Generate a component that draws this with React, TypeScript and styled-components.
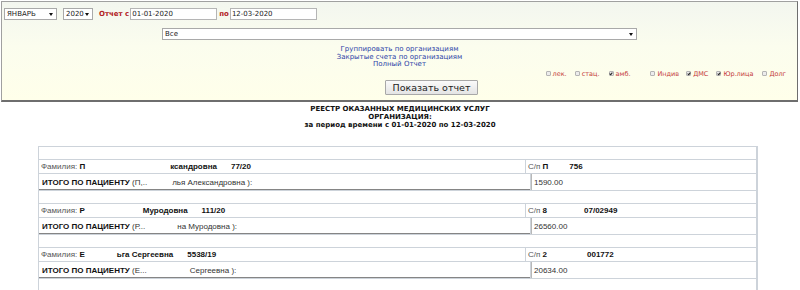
import styled, { createGlobalStyle } from 'styled-components'

interface PatientRow {
  initial: string
  nameHidden: number
  nameTail: string
  card: string
  totalInitial: string
  totalHidden: number
  totalTail: string
  policyHead: string
  policyHidden: number
  policyTail: string
  sum: string
}

const patients: PatientRow[] = [
  {
    initial: 'П',
    nameHidden: 85,
    nameTail: 'ксандровна',
    card: '77/20',
    totalInitial: 'П,..',
    totalHidden: 25,
    totalTail: 'лья Александровна ):',
    policyHead: 'П',
    policyHidden: 21,
    policyTail: '756',
    sum: '1590.00',
  },
  {
    initial: 'Р',
    nameHidden: 58,
    nameTail: 'Муродовна',
    card: '111/20',
    totalInitial: 'Р...',
    totalHidden: 32,
    totalTail: 'на Муродовна ):',
    policyHead: '8',
    policyHidden: 37,
    policyTail: '07/02949',
    sum: '26560.00',
  },
  {
    initial: 'Е',
    nameHidden: 32,
    nameTail: 'ьга Сергеевна',
    card: '5538/19',
    totalInitial: 'Е...',
    totalHidden: 43,
    totalTail: 'Сергеевна ):',
    policyHead: '2',
    policyHidden: 40,
    policyTail: '001772',
    sum: '20634.00',
  },
]

const flags = [
  { label: 'лек.', checked: false, space: 0 },
  { label: 'стац.', checked: false, space: 8 },
  { label: 'амб.', checked: true, space: 9 },
  { label: 'Индив', checked: false, space: 20 },
  { label: 'ДМС', checked: true, space: 7 },
  { label: 'Юр.лица', checked: true, space: 8 },
  { label: 'Долг', checked: false, space: 9 },
]

function App() {
  return (
    <>
      <GlobalStyle />
      <FilterPanel>
        <TopRow>
          <SelectWrap $width={53}>
            <Select defaultValue="1">
              <option value="1">ЯНВАРЬ</option>
            </Select>
          </SelectWrap>
          <SelectWrap $width={30} $space={6}>
            <Select defaultValue="2020">
              <option value="2020">2020</option>
            </Select>
          </SelectWrap>
          <FieldLabel $space={6}>Отчет с</FieldLabel>
          <DateInput defaultValue="01-01-2020" />
          <FieldLabel $space={2}>по</FieldLabel>
          <DateInput defaultValue="12-03-2020" />
        </TopRow>
        <TypeRow>
          <SelectWrap $width={475}>
            <Select defaultValue="all">
              <option value="all">Все</option>
            </Select>
          </SelectWrap>
        </TypeRow>
        <LinkList>
          <ReportLink href="#">Группировать по организациям</ReportLink>
          <ReportLink href="#">Закрытые счета по организациям</ReportLink>
          <ReportLink href="#">Полный Отчет</ReportLink>
        </LinkList>
        <FlagRow>
          {flags.map((f) => (
            <Flag key={f.label} $space={f.space}>
              <FlagBox type="checkbox" defaultChecked={f.checked} />
              {f.label}
            </Flag>
          ))}
        </FlagRow>
        <ButtonRow>
          <ShowButton type="button">Показать отчет</ShowButton>
        </ButtonRow>
      </FilterPanel>

      <Heading>
        <div>РЕЕСТР ОКАЗАННЫХ МЕДИЦИНСКИХ УСЛУГ</div>
        <div>ОРГАНИЗАЦИЯ:</div>
        <div>за период времени с 01-01-2020 по 12-03-2020</div>
      </Heading>

      <Registry>
        {patients.map((p) => (
          <div key={p.card}>
            <Spacer />
            <Row $height={13}>
              <Cell $width={487} $pad={2}>
                <Muted>Фамилия:&nbsp;</Muted>
                <Strong>{p.initial}</Strong>
                <Hidden $width={p.nameHidden} />
                <Strong>{p.nameTail}</Strong>
                <Strong $space={14}>{p.card}</Strong>
              </Cell>
              <Cell $pad={2}>
                <Muted>С/п&nbsp;</Muted>
                <Strong>{p.policyHead}</Strong>
                <Hidden $width={p.policyHidden} />
                <Strong>{p.policyTail}</Strong>
              </Cell>
            </Row>
            <Row $height={16}>
              <TotalCell $width={492} $pad={3}>
                <Strong>ИТОГО ПО ПАЦИЕНТУ</Strong>
                <Plain>&nbsp;({p.totalInitial}</Plain>
                <Hidden $width={p.totalHidden} />
                <Plain>{p.totalTail}</Plain>
              </TotalCell>
              <SumCell $pad={2}>
                <Plain>{p.sum}</Plain>
              </SumCell>
            </Row>
          </div>
        ))}
        <Spacer />
      </Registry>
    </>
  )
}

export default App

const GlobalStyle = createGlobalStyle`
  body {
    margin: 0;
    background: #ffffff;
    font-family: "DejaVu Sans", Verdana, sans-serif;
  }
`

const FilterPanel = styled.div`
  box-sizing: border-box;
  width: 797px;
  height: 101px;
  margin: 1px 0 0 1px;
  padding: 5px 2px 0;
  border: 1px solid #a0a0a0;
  border-right-color: #6e6e6e;
  border-bottom: 2px solid #6e6e6e;
  background: linear-gradient(180deg, #f3f6ef 0%, #fbfdee 45%, #ffffea 100%);
`

const TopRow = styled.div`
  display: flex;
  align-items: center;
  height: 13px;
`

const SelectWrap = styled.div<{ $width: number; $space?: number }>`
  position: relative;
  display: flex;
  width: ${(p) => p.$width}px;
  margin-left: ${(p) => p.$space ?? 0}px;

  &::after {
    content: '';
    position: absolute;
    right: 4px;
    top: 5px;
    border-left: 2px solid transparent;
    border-right: 2px solid transparent;
    border-top: 3px solid #111;
    pointer-events: none;
  }
`

const Select = styled.select`
  appearance: none;
  box-sizing: border-box;
  width: 100%;
  height: 12px;
  padding: 0 2px;
  border: 1px solid #a9a9a9;
  border-radius: 0;
  background: #fff;
  font-family: "DejaVu Sans", Verdana, sans-serif;
  font-size: 7px;
  line-height: 10px;
  color: #222;
`

const FieldLabel = styled.span<{ $space: number }>`
  margin: 0 1px 0 ${(p) => p.$space}px;
  font-size: 7px;
  font-weight: bold;
  color: #b22222;
`

const DateInput = styled.input`
  box-sizing: border-box;
  width: 87px;
  height: 12px;
  padding: 0 1px;
  border: 1px solid #b5b5b5;
  background: #fff;
  font-family: "DejaVu Sans", Verdana, sans-serif;
  font-size: 7px;
  color: #222;
`

const TypeRow = styled.div`
  display: flex;
  justify-content: center;
  margin-top: 8px;
`

const LinkList = styled.div`
  display: flex;
  flex-direction: column;
  align-items: center;
  margin-top: 6px;
`

const ReportLink = styled.a`
  font-size: 7px;
  line-height: 7.5px;
  color: #2b3fa8;
  text-decoration: none;
`

const FlagRow = styled.div`
  display: flex;
  justify-content: flex-end;
  align-items: center;
  height: 8px;
  padding-right: 9px;
  margin-top: 1px;
`

const Flag = styled.label<{ $space: number }>`
  display: flex;
  align-items: center;
  margin-left: ${(p) => p.$space}px;
  font-size: 6.5px;
  color: #c43a3a;
`

const FlagBox = styled.input`
  appearance: none;
  position: relative;
  box-sizing: border-box;
  width: 5px;
  height: 5px;
  margin: 0 2px 0 0;
  border: 1px solid #b4b4b4;
  border-radius: 1px;
  background: #ececec;

  &:checked::after {
    content: '';
    position: absolute;
    left: 0.5px;
    top: -0.5px;
    width: 1px;
    height: 2px;
    border-right: 1px solid #222;
    border-bottom: 1px solid #222;
    transform: rotate(40deg);
  }
`

const ButtonRow = styled.div`
  display: flex;
  justify-content: center;
  margin-top: 2px;
  padding-left: 64px;
`

const ShowButton = styled.button`
  height: 15px;
  padding: 0 7px;
  border: 1px solid #a8a8a8;
  border-radius: 1px;
  background: linear-gradient(#fafafa, #e4e4e4);
  font-family: "DejaVu Sans", Verdana, sans-serif;
  font-size: 9.5px;
  line-height: 13px;
  color: #222;
`

const Heading = styled.div`
  margin-top: 3px;
  text-align: center;
  font-size: 7px;
  line-height: 8px;
  font-weight: bold;
  color: #111;
`

const Registry = styled.div`
  box-sizing: border-box;
  width: 720px;
  margin: 17px 0 0 38px;
  border-top: 1px solid #cdd3da;
  border-left: 1px solid #cdd3da;
  border-right: 2px solid #cdd3da;
  font-family: "Liberation Sans", Arial, sans-serif;
  font-size: 8px;
`

const Spacer = styled.div`
  height: 12px;
  border-bottom: 1px solid #cdd3da;
`

const Row = styled.div<{ $height: number }>`
  display: flex;
  height: ${(p) => p.$height}px;
  border-bottom: 1px solid #cdd3da;
`

const Cell = styled.div<{ $width?: number; $pad: number }>`
  box-sizing: border-box;
  display: flex;
  align-items: center;
  flex: ${(p) => (p.$width ? `0 0 ${p.$width}px` : '1')};
  padding-left: ${(p) => p.$pad}px;
  border-right: ${(p) => (p.$width ? '1px solid #cdd3da' : 'none')};
  white-space: pre;
`

const TotalCell = styled(Cell)`
  box-shadow: inset 0 -1px 0 #858585;
`

const SumCell = styled(Cell)`
  border-left: 1px solid #b8b8b8;
`

const Muted = styled.span`
  color: #555;
`

const Strong = styled.span<{ $space?: number }>`
  margin-left: ${(p) => p.$space ?? 0}px;
  font-weight: bold;
  color: #111;
`

const Plain = styled.span`
  color: #333;
`

const Hidden = styled.span<{ $width: number }>`
  display: inline-block;
  width: ${(p) => p.$width}px;
`
